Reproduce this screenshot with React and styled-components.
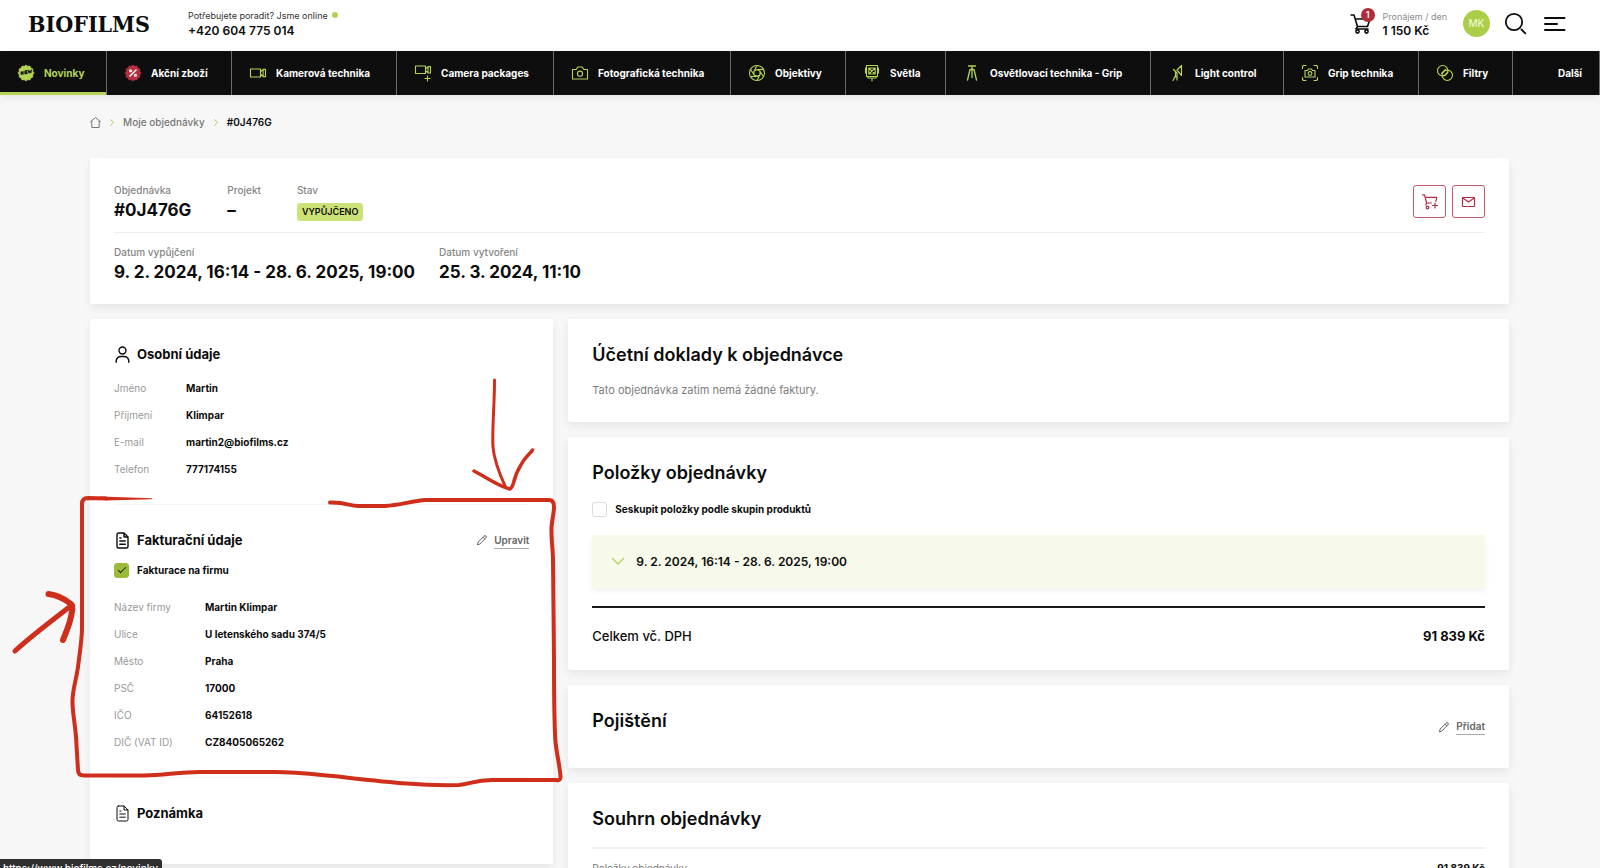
import React from "react";
import styled, { createGlobalStyle, css } from "styled-components";

const GlobalStyle = createGlobalStyle`
  *, *::before, *::after { box-sizing: border-box; }
  body {
    margin: 0;
    background: #f7f7f7;
    color: #0c0c0c;
    font-family: Inter, "Liberation Sans", sans-serif;
    font-size: 10px;
  }
  h1, h2, dl, dd, dt, p, ol, ul { margin: 0; padding: 0; }
  ol, ul { list-style: none; }
  a { color: inherit; text-decoration: none; }
  button { font: inherit; cursor: pointer; }
`;

const Page = styled.div`
  position: relative;
  height: 100vh;
  overflow: hidden auto;
  scrollbar-width: none;
`;

const Svg = styled.svg`
  display: block;
  flex: none;
  width: ${(p) => p.$w}px;
  height: ${(p) => p.$h || p.$w}px;
  fill: none;
  stroke: currentColor;
  stroke-width: ${(p) => p.$line || 1.5};
  stroke-linecap: round;
  stroke-linejoin: round;
  overflow: visible;
`;

/* ---------- header ---------- */

const Header = styled.header`
  display: flex;
  align-items: center;
  height: 51px;
  padding: 0 35px 4px 28px;
  background: #fff;
`;

const Logo = styled.a`
  width: 160px;
  font-family: "DejaVu Serif Condensed", "DejaVu Serif", serif;
  font-size: 23px;
  line-height: 28px;
  font-weight: 700;
`;

const Contact = styled.div`
  flex: 1;
  padding-bottom: 2px;
  line-height: 15px;
`;

const Hint = styled.p`
  display: flex;
  align-items: center;
  gap: 4px;
  font-size: 9px;
  color: ${(p) => (p.$muted ? "#8b8b8b" : "#333")};
`;

const Dot = styled.span`
  width: 6px;
  height: 6px;
  border-radius: 50%;
  background: #b4d34f;
`;

const Strong = styled.a`
  display: block;
  font-size: 12px;
  font-weight: 600;
`;

const Cart = styled.a`
  display: flex;
  align-items: center;
  gap: 12px;
  margin-right: 16px;
  line-height: 14px;
`;

const CartIcon = styled.span`
  position: relative;
`;

const Count = styled.span`
  position: absolute;
  top: -6px;
  right: -4px;
  width: 14px;
  height: 14px;
  border-radius: 50%;
  background: #b12c3a;
  color: #fff;
  font-size: 9px;
  font-weight: 600;
  line-height: 14px;
  text-align: center;
`;

const Avatar = styled.a`
  width: 27px;
  height: 27px;
  margin-right: 15px;
  border-radius: 50%;
  background: #abcd48;
  color: #eef6cf;
  font-weight: 500;
  line-height: 27px;
  text-align: center;
`;

const PlainButton = styled.button`
  padding: 0;
  border: 0;
  background: none;
  color: inherit;
  & + & { margin-left: 18px; }
`;

/* ---------- category bar ---------- */

const NavBar = styled.nav`
  position: relative;
  background: #0e0e0e;
  box-shadow: 0 3px 8px rgba(0, 0, 0, 0.07);
`;

const NavList = styled.ul`
  display: grid;
  grid-template-columns: 107fr 125fr 165fr 157fr 177fr 115fr 100fr 205fr 133fr 135fr 94fr 87fr;
`;

const NavLink = styled.a`
  display: flex;
  align-items: center;
  gap: 10px;
  height: 44px;
  padding-left: 18px;
  border-right: 1px solid #6c6c6c;
  color: #fff;
  font-weight: 700;
  white-space: nowrap;
  svg { color: #b4d455; }
  ${(p) => p.$active && css`
    color: #b4d455;
    box-shadow: inset 0 -3px #b4d455;
  `}
  ${(p) => p.$last && css`
    justify-content: flex-end;
    padding-right: 17px;
  `}
`;

/* ---------- page body ---------- */

const Main = styled.main`
  padding: 0 91px 24px 90px;
`;

const Crumbs = styled.ol`
  display: flex;
  align-items: center;
  gap: 9px;
  height: 63px;
  padding-bottom: 9px;
  color: #777;
  font-weight: 500;
  li { display: flex; align-items: center; gap: 9px; }
  [aria-current] { color: #0c0c0c; font-weight: 600; }
`;

const Chevron = styled(Svg)`
  color: #b4d455;
`;

const Card = styled.section`
  padding: 24px;
  border-radius: 2px;
  background: #fff;
  box-shadow: 0 4px 10px rgba(0, 0, 0, 0.07);
`;

const SummaryCard = styled(Card)`
  margin-bottom: 15px;
  padding-bottom: 20px;
`;

const SummaryRow = styled.div`
  display: flex;
  gap: ${(p) => p.$gap}px;
  ${(p) => p.$ruled && css`
    padding-bottom: 10px;
    margin-bottom: 11px;
    border-bottom: 1px solid #efefef;
  `}
`;

const Fact = styled.dl`
  dt { color: #858585; line-height: 16px; font-weight: 500; }
  dd { font-size: 17px; line-height: 24px; font-weight: 700; white-space: nowrap; }
`;

const Badge = styled.span`
  display: block;
  margin-top: 5px;
  padding: 0 5px;
  border-radius: 3px;
  background: #cbe279;
  font-size: 9px;
  font-weight: 600;
  line-height: 18px;
`;

const Actions = styled.div`
  display: flex;
  gap: 6px;
  margin: 3px 0 0 auto;
`;

const IconButton = styled.button`
  display: grid;
  place-items: center;
  width: 33px;
  height: 33px;
  padding: 0;
  border: 1px solid #c4596a;
  border-radius: 3px;
  background: #fff;
  color: #b12c45;
`;

const Columns = styled.div`
  display: grid;
  grid-template-columns: minmax(0, 33fr) minmax(0, 67fr);
  align-items: start;
  gap: 15px;
`;

const Stack = styled.div`
  display: grid;
  gap: 15px;
`;

const SideCard = styled(Card)`
  padding: 0 24px;
`;

const Block = styled.section`
  padding: 24px 0 25px;
  & + & { border-top: 1px solid #f5f5f5; }
`;

const BlockHead = styled.div`
  display: flex;
  align-items: center;
  height: 22px;
  h2 { flex: 1; margin-left: 6px; font-size: 13px; font-weight: 700; }
`;

const Details = styled.dl`
  display: grid;
  grid-template-columns: ${(p) => p.$label}px 1fr;
  row-gap: 7px;
  margin-top: ${(p) => p.$top}px;
  line-height: 20px;
  dt { color: #999; }
  dd { font-weight: 700; }
`;

const EditLink = styled.a`
  display: flex;
  align-items: center;
  gap: 7px;
  color: #666;
  font-weight: 600;
  line-height: 16px;
  span { border-bottom: 1px solid #aaa; }
`;

const CheckLabel = styled.label`
  display: flex;
  align-items: center;
  gap: 8px;
  height: ${(p) => p.$h}px;
  margin-top: ${(p) => p.$top}px;
  font-weight: 700;
`;

const Check = styled.input`
  appearance: none;
  display: grid;
  place-items: center;
  width: 15px;
  height: 15px;
  margin: 0;
  border: 1px solid #dcdcdc;
  border-radius: 3px;
  background: #fff;
  &:checked { border-color: #9dbb3b; background: #9dbb3b; }
  &:checked::after {
    content: "";
    width: 8px;
    height: 4px;
    margin-bottom: 3px;
    border: solid #1c2606;
    border-width: 0 0 1px 1px;
    transform: rotate(-45deg);
  }
`;

const NoteSpace = styled.div`
  height: 15px;
`;

const Title = styled.h2`
  font-size: 18px;
  font-weight: 600;
  line-height: 24px;
`;

const Muted = styled.p`
  margin-top: 15px;
  color: #7d7d7d;
  font-size: 11px;
  line-height: 16px;
`;

const Period = styled.button`
  display: flex;
  align-items: center;
  gap: 12px;
  width: 100%;
  height: 53px;
  margin-top: 18px;
  padding: 0 20px;
  border: 0;
  background: #f7f9ea;
  box-shadow: 0 3px 6px rgba(0, 0, 0, 0.06);
  color: inherit;
  font-size: 12px;
  font-weight: 600;
`;

const Total = styled.div`
  display: flex;
  justify-content: space-between;
  margin-top: 18px;
  padding-top: 18px;
  border-top: 2px solid #1a1a1a;
  font-size: 13px;
  font-weight: 500;
  line-height: 20px;
  strong { font-weight: 700; }
`;

const InsuranceRow = styled.div`
  display: flex;
  justify-content: space-between;
  height: 35px;
`;

const SumLine = styled.div`
  display: flex;
  justify-content: space-between;
  margin-top: 16px;
  padding-top: 9px;
  border-top: 2px solid #f0f0f0;
  color: #777;
  line-height: 20px;
  strong { color: #0c0c0c; font-weight: 700; }
`;

const Markup = styled.svg`
  position: absolute;
  top: 0;
  left: 0;
  width: 600px;
  height: 820px;
  fill: none;
  stroke: #cf2e1b;
  stroke-linecap: round;
  stroke-linejoin: round;
  pointer-events: none;
`;

const StatusBubble = styled.div`
  position: fixed;
  left: 0;
  bottom: -11px;
  height: 20px;
  padding: 0 4px 0 3px;
  border-radius: 0 3px 0 0;
  background: #303030;
  color: #fff;
  font-weight: 500;
  line-height: 18px;
`;

/* ---------- drawings ---------- */

const sealPath = (() => {
  const pts = [];
  for (let i = 0; i < 24; i++) {
    const r = i % 2 ? 7 : 8;
    const a = (i * Math.PI) / 12;
    pts.push(`${(8 + r * Math.cos(a)).toFixed(2)},${(8 + r * Math.sin(a)).toFixed(2)}`);
  }
  return pts.join(" ");
})();

const icons = {
  news: (
    <>
      <polygon points={sealPath} fill="#b4d455" stroke="#b4d455" strokeWidth=".6" />
      <path d="M3.2 9.6V6.8l1.9 2.4V6.4M9 5.6 7 6v2.8l2.2-.4M7 7.4l1.8-.3M10.2 5.4l.8 2.6.8-2 1.1 1.7.3-2.8" stroke="#0e0e0e" />
    </>
  ),
  sale: (
    <>
      <polygon points={sealPath} fill="#b5303f" stroke="#b5303f" strokeWidth=".6" />
      <path d="m5 11 6-6" stroke="#fff" strokeWidth="1.4" />
      <circle cx="5.6" cy="5.8" r="1" stroke="#fff" />
      <circle cx="10.4" cy="10.2" r="1" stroke="#fff" />
    </>
  ),
  video: <path d="M.5 4h10v8H.5zM10.5 7l2.6-2.6H15.5v7.2h-2.4L10.5 9M13.1 4.4v7.2" />,
  videoPlus: <path d="M.5 1h10v7.500H.5zM10.500 4l2.600-2.400h2.400v6.400h-2.400L10.500 5.500M13 1.600v6.400M12.500 11v5M10 13.500h5" />,
  photo: (
    <>
      <path d="M.5 4.500h3.700L5.700 2h4.600l1.500 2.500h3.700V14H.5z" />
      <circle cx="8" cy="8.700" r="2.600" />
    </>
  ),
  lens: (
    <>
      <circle cx="8" cy="8" r="7.500" />
      <path d="m8 4.600 3 1.700v3.400l-3 1.700-3-1.700V6.300zM8 4.600l6.500-.2M11 6.300l3.500 5.400M11 9.700 8 15.500M8 11.400l-6.500.2M5 9.700 1.500 4.300M5 6.300 8 .5" />
    </>
  ),
  light: (
    <path d="M2.500.5h11v11h-11zM4.800 3h6.400v6H4.800zM4.800 3l6.400 6M11.200 3 4.800 9M4 11.500V13h8v-1.500M8 13v3M1.500 3v5M14.500 3v5" />
  ),
  stand: <path strokeWidth="1.3" d="M4.500 1h7M8 1v10.500M6 4.500h4M6 4.500 3.500 15M10 4.500 12.500 15M8 11.500V12.500" />,
  control: <path strokeWidth="1.2" d="M12.500.5v10L8 5zM8 5l4.500-4.500M4.500 4.500 8 8M6.500 6v6M8 8v7M6.500 10.500 4 15.500M6.500 12h1.500" />,
  grip: (
    <>
      <path d="M.5 3.500v-2l1-1h2.500M12 .5h2.500l1 1v2M15.500 12.500v2l-1 1H12M4 15.500H1.500l-1-1v-2M3 5.500h2.500L6.500 4h3l1 1.500H13V12H3z" />
      <circle cx="8" cy="8.500" r="1.900" />
    </>
  ),
  filters: (
    <>
      <circle cx="5.700" cy="5.700" r="5.200" />
      <circle cx="10.300" cy="10.300" r="5.200" />
      <path d="m4.500 8.500 4-4M7 11l4-4" />
    </>
  ),
};

const NavIcon = ({ name }) => (
  <Svg $w={16} $line={1.1} viewBox="0 0 16 16" aria-hidden="true">{icons[name]}</Svg>
);

const CartDrawing = () => (
  <Svg $w={21} $h={20} $line={1.6} viewBox="0 0 21 20" aria-hidden="true">
    <path d="M1 1h3l3.500 11.500h10L20 5H5.200M7.500 12.500 6 15h12" />
    <circle cx="7.500" cy="17.500" r="1.600" />
    <circle cx="16.500" cy="17.500" r="1.600" />
  </Svg>
);

const Arrow = () => (
  <Chevron $w={4} $h={7} $line={1} viewBox="0 0 4 7" aria-hidden="true"><path d="m.5.5 3 3-3 3" /></Chevron>
);

const Pencil = () => (
  <Svg $w={10} $line={1} viewBox="0 0 10 10" aria-hidden="true">
    <path d="M.5 9.500 1.200 7 7 1.200Q8 .2 9 1t-.2 2L3 8.800zM6 2.200l1.800 1.800" />
  </Svg>
);

const FileDrawing = ({ muted }) => (
  <Svg $w={17} $line={muted ? 1 : 1.4} viewBox="0 0 17 17" aria-hidden="true">
    <path d="M4.500 1h5.500l4 4v9.500a1.500 1.500 0 0 1-1.500 1.500h-8A1.500 1.500 0 0 1 3 14.500v-12A1.500 1.500 0 0 1 4.500 1zM10 1v4h4M5.800 6H7M5.800 9h5.500M5.800 12.200h5.500" />
  </Svg>
);

const UserDrawing = () => (
  <Svg $w={17} $line={1.4} viewBox="0 0 17 17" aria-hidden="true">
    <circle cx="8.500" cy="4.500" r="3.500" />
    <path d="M2.200 16.200v-1.700a5 5 0 0 1 5-4h2.600a5 5 0 0 1 5 4v1.700" />
  </Svg>
);

/* ---------- data ---------- */

const categories = [
  ["news", "Novinky"],
  ["sale", "Akční zboží"],
  ["video", "Kamerová technika"],
  ["videoPlus", "Camera packages"],
  ["photo", "Fotografická technika"],
  ["lens", "Objektivy"],
  ["light", "Světla"],
  ["stand", "Osvětlovací technika - Grip"],
  ["control", "Light control"],
  ["grip", "Grip technika"],
  ["filters", "Filtry"],
];

const personal = [
  ["Jméno", "Martin"],
  ["Příjmení", "Klimpar"],
  ["E-mail", "martin2@biofilms.cz"],
  ["Telefon", "777174155"],
];

const billing = [
  ["Název firmy", "Martin Klimpar"],
  ["Ulice", "U letenského sadu 374/5"],
  ["Město", "Praha"],
  ["PSČ", "17000"],
  ["IČO", "64152618"],
  ["DIČ (VAT ID)", "CZ8405065262"],
];

const DetailList = ({ rows, label, top }) => (
  <Details $label={label} $top={top}>
    {rows.map(([k, v]) => (
      <React.Fragment key={k}>
        <dt>{k}</dt>
        <dd>{v}</dd>
      </React.Fragment>
    ))}
  </Details>
);

export default function App() {
  return (
    <Page>
      <GlobalStyle />
      <Header>
        <Logo href="#">BIOFILMS</Logo>
        <Contact>
          <Hint>Potřebujete poradit? Jsme online <Dot /></Hint>
          <Strong href="tel:+420604775014">+420 604 775 014</Strong>
        </Contact>
        <Cart href="#cart">
          <CartIcon><CartDrawing /><Count>1</Count></CartIcon>
          <div>
            <Hint $muted>Pronájem / den</Hint>
            <Strong as="span">1 150 Kč</Strong>
          </div>
        </Cart>
        <Avatar href="#account">MK</Avatar>
        <PlainButton aria-label="Hledat">
          <Svg $w={21} viewBox="0 0 21 21" $line={1.8}><circle cx="9" cy="9" r="8.200" /><path d="m16.500 16.500 3.800 3.800" /></Svg>
        </PlainButton>
        <PlainButton aria-label="Menu">
          <Svg $w={21} $h={14} viewBox="0 0 21 14" $line={2}><path d="M1 1h19.500M1 7h12M1 13h19.500" /></Svg>
        </PlainButton>
      </Header>

      <NavBar aria-label="Kategorie">
        <NavList>
          {categories.map(([icon, text], i) => (
            <li key={text}>
              <NavLink href={`#${icon}`} $active={i === 0}><NavIcon name={icon} />{text}</NavLink>
            </li>
          ))}
          <li><NavLink href="#more" $last>Další</NavLink></li>
        </NavList>
      </NavBar>

      <Main>
        <Crumbs>
          <li>
            <a href="#home" aria-label="Domů">
              <Svg $w={11} $line={1} viewBox="0 0 11 11"><path d="M.5 4.800 5.500.5l5 4.300M1.800 4v6.500h7.400V4" /></Svg>
            </a>
            <Arrow />
          </li>
          <li><a href="#orders">Moje objednávky</a><Arrow /></li>
          <li aria-current="page">#0J476G</li>
        </Crumbs>

        <SummaryCard>
          <SummaryRow $gap={36} $ruled>
            <Fact><dt>Objednávka</dt><dd>#0J476G</dd></Fact>
            <Fact><dt>Projekt</dt><dd>–</dd></Fact>
            <Fact><dt>Stav</dt><dd><Badge>VYPŮJČENO</Badge></dd></Fact>
            <Actions>
              <IconButton aria-label="Přidat do košíku">
                <Svg $w={16} $line={1.200} viewBox="0 0 16 16">
                  <path d="M.5.800h2L4.600 9h4.800M3.200 3.300h11.600l-.9 4M4.600 9l-.8 2M13 9v5M10.500 11.500h5" />
                  <circle cx="5.500" cy="13.500" r="1.300" />
                </Svg>
              </IconButton>
              <IconButton aria-label="Poslat e-mailem">
                <Svg $w={13} $h={10} $line={1.200} viewBox="0 0 13 10">
                  <rect x=".5" y=".5" width="12" height="9" rx=".8" />
                  <path d="m.8 1 5.700 4 5.700-4" />
                </Svg>
              </IconButton>
            </Actions>
          </SummaryRow>
          <SummaryRow $gap={24}>
            <Fact><dt>Datum vypůjčení</dt><dd>9. 2. 2024, 16:14 - 28. 6. 2025, 19:00</dd></Fact>
            <Fact><dt>Datum vytvoření</dt><dd>25. 3. 2024, 11:10</dd></Fact>
          </SummaryRow>
        </SummaryCard>

        <Columns>
          <SideCard as="div">
            <Block>
              <BlockHead><UserDrawing /><h2>Osobní údaje</h2></BlockHead>
              <DetailList rows={personal} label={72} top={13} />
            </Block>
            <Block>
              <BlockHead>
                <FileDrawing /><h2>Fakturační údaje</h2>
                <EditLink href="#edit"><Pencil /><span>Upravit</span></EditLink>
              </BlockHead>
              <CheckLabel $h={20} $top={9}><Check type="checkbox" defaultChecked />Fakturace na firmu</CheckLabel>
              <DetailList rows={billing} label={91} top={17} />
            </Block>
            <Block>
              <BlockHead><FileDrawing muted /><h2>Poznámka</h2></BlockHead>
              <NoteSpace />
            </Block>
          </SideCard>

          <Stack>
            <Card>
              <Title>Účetní doklady k objednávce</Title>
              <Muted>Tato objednávka zatím nemá žádné faktury.</Muted>
            </Card>
            <Card>
              <Title>Položky objednávky</Title>
              <CheckLabel $h={16} $top={16}><Check type="checkbox" />Seskupit položky podle skupin produktů</CheckLabel>
              <Period>
                <Chevron $w={12} $h={7} $line={1.200} viewBox="0 0 12 7"><path d="m.5.5 5.500 5.500 5.500-5.500" /></Chevron>
                9. 2. 2024, 16:14 - 28. 6. 2025, 19:00
              </Period>
              <Total><span>Celkem vč. DPH</span><strong>91 839 Kč</strong></Total>
            </Card>
            <Card>
              <InsuranceRow>
                <Title>Pojištění</Title>
                <EditLink href="#insurance"><Pencil /><span>Přidat</span></EditLink>
              </InsuranceRow>
            </Card>
            <Card>
              <Title>Souhrn objednávky</Title>
              <SumLine><span>Položky objednávky</span><strong>91 839 Kč</strong></SumLine>
            </Card>
          </Stack>
        </Columns>
      </Main>

      <Markup viewBox="0 0 600 820" aria-hidden="true">
        <path strokeWidth="4" d="M82 590V504Q82 498 88 498L106 498.500M82 590V627C82 640 80 650 78.500 663C77 678 72 690 72.500 703C73 718 76 728 76.500 745L78 770Q78 775.500 84 775.500H144C165 775 180 772 200 772H274C295 772 312 774 333 776C360 779 385 782 407 783.500C425 785 440 785.500 459 785C470 784 475 780 492 780H556Q561 781 560.500 776C559 760 555 748 555 733C554 710 554 690 554 660L553 560C553 550 551 538 551.500 527C552 520 554 513 554 507Q554 500 549 500H425.500C412 501 400 505 385 506H358C350 506 345 502 330 502.500" />
        <path d="M100 496.500 152 498.300v1L106 500.500z" fill="#cf2e1b" stroke="none" />
        <path strokeWidth="3" d="M494.500 380C494.500 405 492 430 493 447C494 460 500 475 505.500 487" />
        <path strokeWidth="3.500" d="M474 471C486 477 498 486 510 489Q512 488 513.500 483C516 472 519 468 521.500 464C525 457 530 454 532.500 450" />
        <path strokeWidth="5" d="M15 651C30 637 50 622 72 605" />
        <path strokeWidth="6" d="M48.500 594C58 595 66 600 71 604Q73 606 72 611C71 622 66 632 63 640" />
      </Markup>

      <StatusBubble>https://www.biofilms.cz/novinky</StatusBubble>
    </Page>
  );
}
